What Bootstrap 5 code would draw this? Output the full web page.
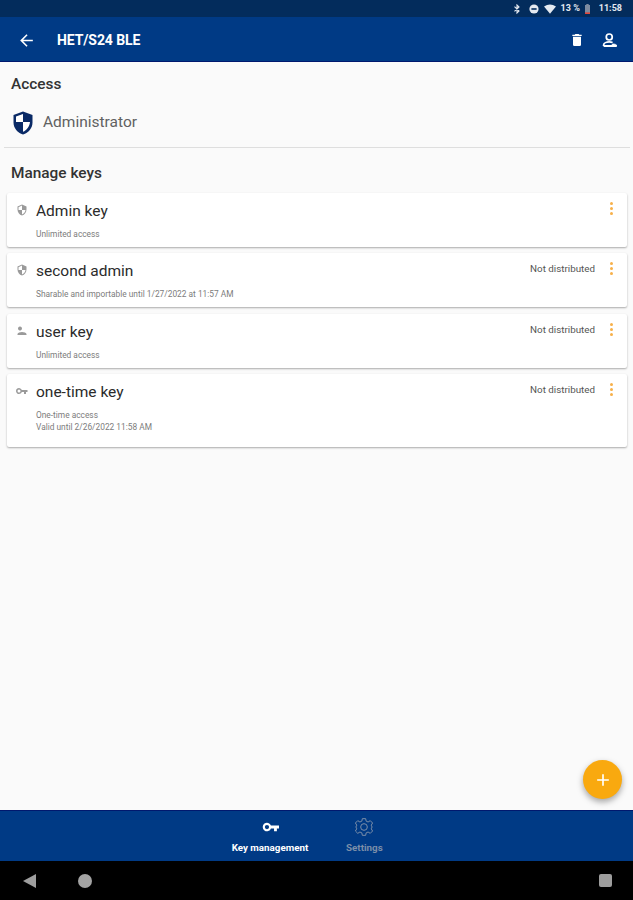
<!DOCTYPE html>
<html lang="en">
<head>
<meta charset="utf-8">
<title>HET/S24 BLE</title>
<link rel="stylesheet" href="https://cdn.jsdelivr.net/npm/bootstrap@5.3.0/dist/css/bootstrap.min.css">
<style>
html,body{height:900px;overflow:hidden}
body{font-family:Roboto,"Liberation Sans",sans-serif;background:#fafafa;color:#212121}
.shell{height:900px;position:relative}
.status{height:17px;background:#032c5c;color:#e4e9f0;font-size:9px;font-weight:700;padding-right:11px;gap:5px}
.status svg{display:block}
.status .bt{margin-right:4px}
.appbar{height:45px;background:#003a85;border-bottom:1.5px solid #00186e;color:#fff;padding:2px 14px 0 17px}
.appbar .ttl{font-size:14px;font-weight:700;margin-left:21px;letter-spacing:-.1px}
.main{padding:0 6px 0 7px;min-height:0}
.sect{font-size:15.4px;font-weight:500;color:#333;line-height:18px;padding-left:4px}
.sect-a{margin-top:13px}
.acc{margin-top:19px;padding-left:6px;height:22px;font-size:15.5px;color:#616161;gap:10px}
.rule{border-top:1px solid #dedede;margin:13px -3px 16px -3px}
.keycard{background:#fff;box-shadow:0 1px 2px rgba(0,0,0,.32);border-radius:2px;margin-top:6.5px;position:relative;padding:8px 0 0 9px;height:54px}
.keycard.tall{height:73px}
.keyico{width:12px;height:12px;margin-top:3px;margin-right:8px;flex:none}
.kname{font-size:15.5px;line-height:20px;color:#2b2b2b}
.ksub{font-size:8.35px;line-height:12px;color:#7c7c7c;margin-top:7px;margin-left:20px}
.kstate{font-size:9.8px;color:#555;margin-top:0;margin-right:15px;line-height:15px}
.dots{width:3px;margin-right:14px;margin-top:1px;gap:2px}
.dots i{display:block;width:3px;height:3px;border-radius:50%;background:#f7b04a}
.fab{position:absolute;right:11px;top:760px;width:39px;height:39px;border-radius:50%;background:#f9a90f;box-shadow:0 3px 6px rgba(0,0,0,.35)}
.tabs{height:51px;background:#003a85;border-top:1.5px solid #00186e;padding-left:231px}
.tab{font-size:9.8px;font-weight:700;line-height:11px;text-align:center;margin-right:37px;padding-top:6px;white-space:nowrap}
.tab svg{display:block;margin:0 auto 5px;height:20px}
.tab-on{color:#fff;width:78px}
.tab-off{color:#7b8ea9;width:36px}
.sysnav{height:39px;background:#000;padding:0 21px 0 23px}
.sys-sq{width:13px;height:13px;background:#9e9e9e;border-radius:2px}
.sys-c{width:14px;height:14px;background:#a3a3a3;border-radius:50%;margin-left:42px}
</style>
</head>
<body>
<div class="shell d-flex flex-column">
  <div class="status d-flex align-items-center justify-content-end flex-shrink-0">
    <svg class="bt" width="6" height="10" viewBox="0 0 6 10" fill="none" stroke="#e4e9f0" stroke-width="1.1"><path d="M0.5 2.7 5 7 3 9V1l2 2L.5 7.3"/></svg>
    <svg width="10" height="10" viewBox="0 0 10 10"><circle cx="5" cy="5" r="4.6" fill="#e4e9f0"/><rect x="2.4" y="4.2" width="5.2" height="1.6" fill="#032c5c"/></svg>
    <svg width="12" height="10" viewBox="0 0 12 10"><path d="M0 2.4Q6-1.4 12 2.4L6 9.8Z" fill="#e4e9f0"/></svg>
    <span>13 %</span>
    <svg width="5" height="10" viewBox="0 0 5 10"><rect y="1" width="5" height="9" fill="#7d8ba0"/><rect x="1.3" width="2.4" height="1" fill="#7d8ba0"/><rect y="8.4" width="5" height="1.6" fill="#e0453a"/></svg>
    <span class="ms-1">11:58</span>
  </div>
  <div class="appbar d-flex align-items-center flex-shrink-0">
    <svg width="19" height="19" viewBox="0 0 24 24" fill="#fff"><path d="M20 11H7.8l5.6-5.6L12 4l-8 8 8 8 1.4-1.4L7.8 13H20z"/></svg>
    <span class="ttl">HET/S24 BLE</span>
    <svg class="ms-auto" width="16" height="16" viewBox="0 0 24 24" fill="#fff"><path d="M15.5 4 14.5 3h-5l-1 1H5v2h14V4zM6 7v12a2 2 0 0 0 2 2h8a2 2 0 0 0 2-2V7z"/></svg>
    <svg style="margin-left:16px" width="18" height="18" viewBox="0 0 24 24" fill="none" stroke="#fff" stroke-width="2.3"><circle cx="11" cy="8" r="4"/><path d="M3.5 20v-1.5c0-2.5 4-4 7.500-4 1.500 0 3 .3 4.500.9"/><path d="M3.500 20H21" stroke-width="2.600"/><path d="M15 17.500c2-.5 4 0 5.500 1v1.500h-6z" fill="#fff" stroke-width="1"/></svg>
  </div>
  <div class="main flex-grow-1">
    <div class="sect sect-a">Access</div>
    <div class="acc d-flex align-items-center">
      <svg width="20" height="24" viewBox="0 0 20 24"><path d="M10 .5 19.500 4v7.500c0 5.500-4 10.300-9.500 12C4.500 21.800.5 17 .5 11.500V4z" fill="#0a2a66"/><path d="M10 3 3 5.600V11h7zM10 11v9.800c3.700-1.400 6.500-5.200 7-9.800z" fill="#fff"/></svg>
      <span>Administrator</span>
    </div>
    <div class="rule"></div>
    <div class="sect">Manage keys</div>
    <div style="height:4px"></div>

    <div class="keycard">
      <div class="d-flex">
        <svg class="keyico" viewBox="0 0 24 24" fill="#9a9a9a"><path d="M12 1 3 5v6c0 5.500 3.800 10.700 9 12 5.200-1.300 9-6.500 9-12V5zm0 11h7c-.5 4.100-3.300 7.800-7 8.900V12H5V6.300l7-3.100z"/></svg>
        <div class="kname flex-grow-1">Admin key</div>
        <div class="dots d-flex flex-column"><i></i><i></i><i></i></div>
      </div>
      <div class="ksub">Unlimited access</div>
    </div>

    <div class="keycard">
      <div class="d-flex">
        <svg class="keyico" viewBox="0 0 24 24" fill="#9a9a9a"><path d="M12 1 3 5v6c0 5.500 3.800 10.700 9 12 5.200-1.300 9-6.500 9-12V5zm0 11h7c-.5 4.100-3.300 7.800-7 8.900V12H5V6.300l7-3.100z"/></svg>
        <div class="kname flex-grow-1">second admin</div>
        <div class="kstate">Not distributed</div>
        <div class="dots d-flex flex-column"><i></i><i></i><i></i></div>
      </div>
      <div class="ksub">Sharable and importable until 1/27/2022 at 11:57 AM</div>
    </div>

    <div class="keycard">
      <div class="d-flex">
        <svg class="keyico" viewBox="0 0 24 24" fill="#9a9a9a"><path d="M12 7a4 4 0 1 0 0 .01zM12 14c-3.700 0-9 1.800-9 4v2h18v-2c0-2.200-5.300-4-9-4z"/></svg>
        <div class="kname flex-grow-1">user key</div>
        <div class="kstate">Not distributed</div>
        <div class="dots d-flex flex-column"><i></i><i></i><i></i></div>
      </div>
      <div class="ksub">Unlimited access</div>
    </div>

    <div class="keycard tall">
      <div class="d-flex">
        <svg class="keyico" style="margin-left:-1px;margin-right:8px;width:13px" viewBox="0 0 24 24" fill="#9a9a9a"><path d="M12.650 10A6 6 0 1 0 12.650 14H17v4h4v-4h3v-4zM7 15a3 3 0 1 1 0-6 3 3 0 0 1 0 6z"/></svg>
        <div class="kname flex-grow-1">one-time key</div>
        <div class="kstate">Not distributed</div>
        <div class="dots d-flex flex-column"><i></i><i></i><i></i></div>
      </div>
      <div class="ksub">One-time access<br>Valid until 2/26/2022 11:58 AM</div>
    </div>
  </div>

  <div class="fab d-flex align-items-center justify-content-center">
    <svg width="20" height="20" viewBox="0 0 24 24" fill="#fff"><path d="M19 13h-6v6h-2v-6H5v-2h6V5h2v6h6z"/></svg>
  </div>

  <div class="tabs d-flex flex-shrink-0">
    <div class="tab tab-on">
      <svg width="17" height="20" viewBox="0 0 24 24" fill="#fff"><path d="M12.650 10A6 6 0 1 0 12.650 14H17v4h4v-4h3v-4zM7 15a3 3 0 1 1 0-6 3 3 0 0 1 0 6z"/></svg>
      Key management
    </div>
    <div class="tab tab-off">
      <svg width="20" height="20" viewBox="0 0 24 24" fill="none" stroke="#7b8ea9" stroke-width="1.200"><path d="M10 2h4l.6 3 2.300 1 2.600-1.600 2.800 2.800L20.700 9.800l1 2.200 0 0 0 0-1 2.200 1.600 2.600-2.800 2.800-2.600-1.600-2.300 1L14 22h-4l-.6-3-2.300-1-2.600 1.600-2.800-2.800 1.600-2.600-1-2.200 1-2.200L1.700 7.200l2.800-2.800L7.100 6l2.300-1z"/><circle cx="12" cy="12" r="4"/></svg>
      Settings
    </div>
  </div>
  <div class="sysnav d-flex align-items-center flex-shrink-0">
    <svg width="13" height="14" viewBox="0 0 13 14"><path d="M13 0v14L0 7z" fill="#9e9e9e"/></svg>
    <div class="sys-c"></div>
    <div class="sys-sq ms-auto"></div>
  </div>
</div>
<script src="https://cdn.jsdelivr.net/npm/bootstrap@5.3.0/dist/js/bootstrap.bundle.min.js"></script>
</body>
</html>
